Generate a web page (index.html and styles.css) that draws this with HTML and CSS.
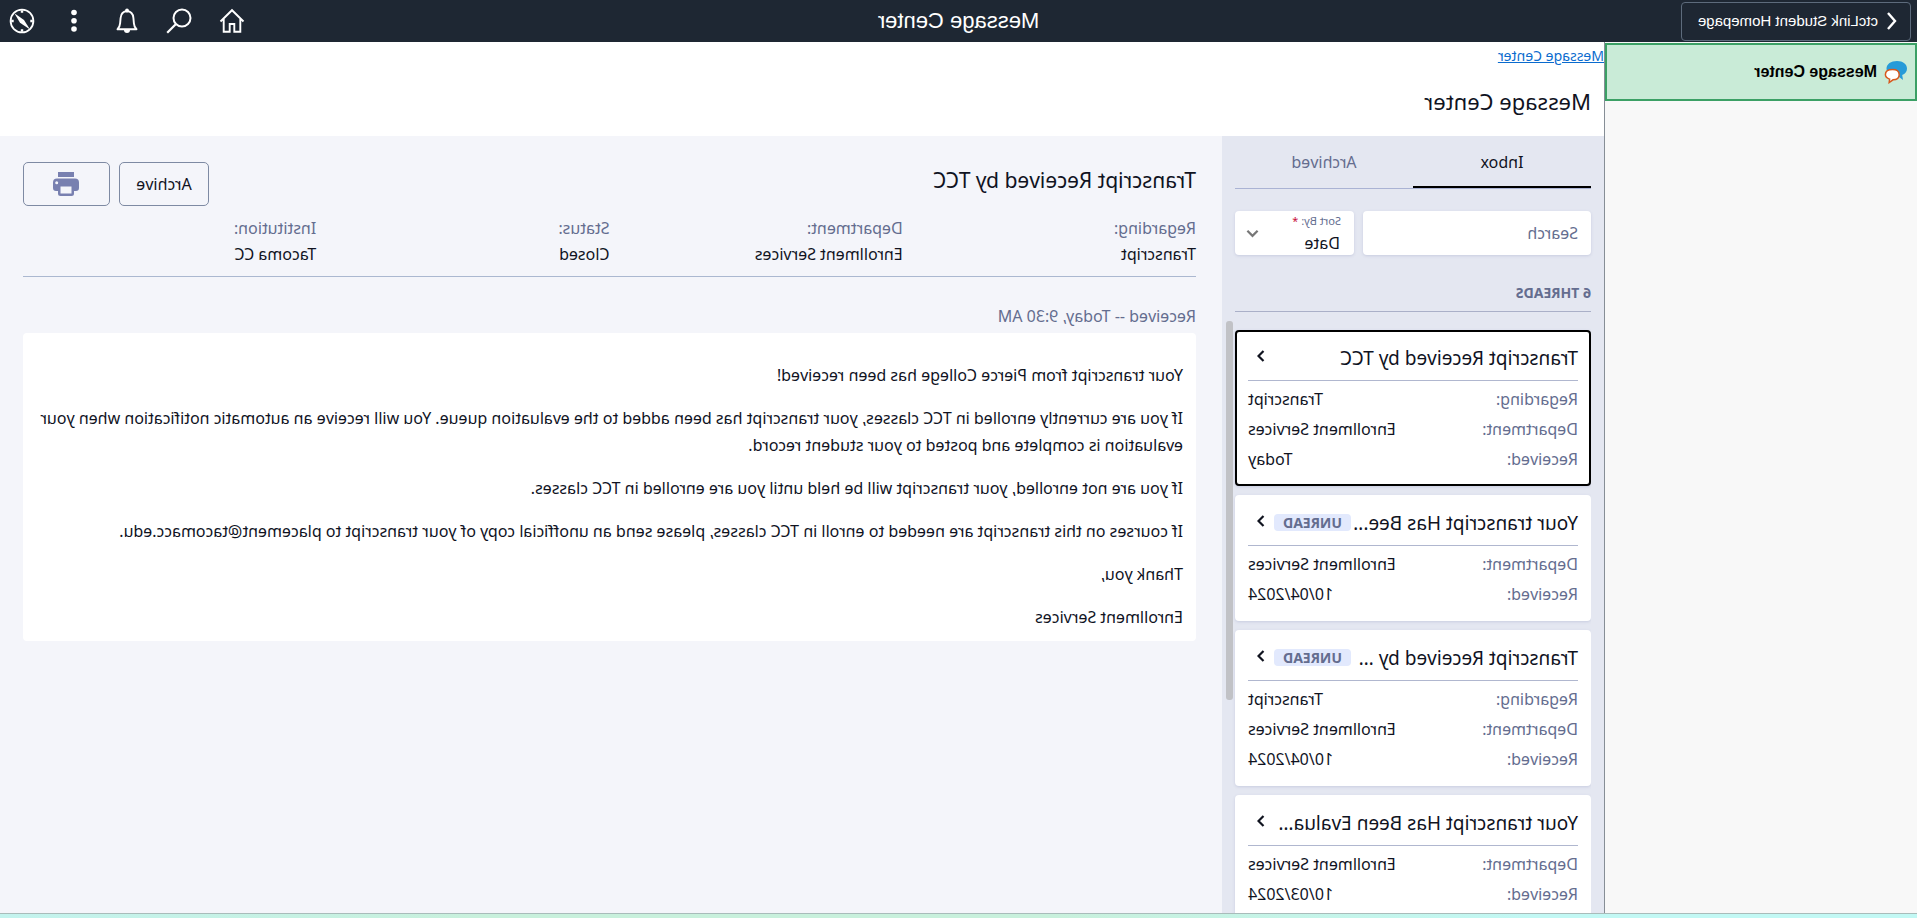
FILE: index.html
```html
<!DOCTYPE html>
<html lang="en">
<head>
<meta charset="utf-8">
<title>Message Center</title>
<link rel="stylesheet" href="styles.css">
</head>
<body>
<div class="app">
  <header class="topbar">
    <div class="topbar-start">
      <button class="back" type="button">
        <svg class="back-icon" viewBox="0 0 10 18" aria-hidden="true"><path d="M9 1L2 9l7 8" fill="none" stroke="currentColor" stroke-width="2.4"/></svg>
        ctcLink Student Homepage
      </button>
    </div>
    <div class="topbar-title">Message Center</div>
    <nav class="topbar-actions">
      <button type="button" class="action" aria-label="Home"><svg viewBox="0 0 26 26"><path d="M1.500 13.500L13 2.200l11.500 11.300M4.700 11v12.800h6V16h4.600v7.800h6V11" fill="none" stroke="currentColor" stroke-width="1.900"/></svg></button>
      <button type="button" class="action" aria-label="Search"><svg viewBox="0 0 26 26"><circle cx="10" cy="10" r="8.500" fill="none" stroke="currentColor" stroke-width="2"/><path d="M16 16l8.800 8.800" stroke="currentColor" stroke-width="2.200"/></svg></button>
      <button type="button" class="action" aria-label="Notifications"><svg viewBox="0 0 26 26"><path d="M3.500 21.300c1.600-1.500 2.400-3.600 2.600-6l.5-5.300C7 6 9.500 3.300 13 3.300s6 2.700 6.400 6.700l.5 5.300c.2 2.400 1 4.500 2.600 6z" fill="none" stroke="currentColor" stroke-width="1.900" stroke-linejoin="round"/><circle cx="13" cy="2.500" r="1.900" fill="currentColor"/><path d="M10 22h6a3 3 0 0 1-6 0z" fill="currentColor"/></svg></button>
      <button type="button" class="action" aria-label="Actions"><svg viewBox="0 0 26 26" fill="currentColor"><circle cx="13" cy="4.500" r="2.800"/><circle cx="13" cy="12.800" r="2.800"/><circle cx="13" cy="21" r="2.800"/></svg></button>
      <button type="button" class="action" aria-label="Navigator"><svg viewBox="0 0 26 26"><circle cx="13" cy="13" r="11.400" fill="none" stroke="currentColor" stroke-width="1.800"/><path d="M20.600 5.200L15 14.800 5 21.500l6-9.600z" fill="currentColor"/><path d="M13 2.200v2.500M13 21.300v2.500M2.200 13h2.500M21.300 13h2.500" stroke="currentColor" stroke-width="2.400"/></svg></button>
    </nav>
  </header>

  <div class="body">
    <aside class="sidebar">
      <a class="side-item" href="#">
        <svg class="chat" viewBox="0 0 24 24" aria-hidden="true"><path d="M11 1C5 1 1 4.200 1 8.700c0 3 1.800 5 4.800 6.400L5 20l5.500-4.200C17 16 21.500 13 21.500 8.500S17 1 11 1z" fill="#269bd8"/><path d="M15.500 9.500c-4.300 0-6.700 2.200-6.700 5.200 0 3.200 2.700 5 6.200 5.100l3.800 2.700-.4-3.400c2.600-.9 4.200-2.400 4.200-4.600 0-3-2.800-5-7.100-5z" fill="#fff" stroke="#d8591d" stroke-width="1.500"/></svg>
        Message Center
      </a>
    </aside>

    <main class="main">
      <div class="heading">
        <a class="crumb" href="#">Message Center</a>
        <h1>Message Center</h1>
      </div>
      <div class="panes">
        <section class="inbox">
          <div class="tabs">
            <button class="tab active" type="button">Inbox</button>
            <button class="tab" type="button">Archived</button>
          </div>
          <div class="filters">
            <input class="search" type="text" placeholder="Search" aria-label="Search">
            <div class="sort">
              <label for="sort">Sort By:<span class="required"> *</span></label>
              <select id="sort"><option>Date</option></select>
              <svg class="sort-icon" viewBox="0 0 14 9" aria-hidden="true"><path d="M1.500 1.500L7 7l5.500-5.500" fill="none" stroke="currentColor" stroke-width="2.400"/></svg>
            </div>
          </div>
          <h2 class="count">6 THREADS</h2>
          <div class="threads">
            <span class="thumb"></span>
            <article class="card selected">
              <div class="card-head"><h3>Transcript Received by TCC</h3><svg class="chevron" viewBox="0 0 8 12"><path d="M1.500 1l5 5-5 5" fill="none" stroke="currentColor" stroke-width="2.200"/></svg></div>
              <dl><dt>Regarding:</dt><dd>Transcript</dd><dt>Department:</dt><dd>Enrollment Services</dd><dt>Received:</dt><dd>Today</dd></dl>
            </article>
            <article class="card">
              <div class="card-head"><h3>Your transcript Has Bee...</h3><span class="badge">UNREAD</span><svg class="chevron" viewBox="0 0 8 12"><path d="M1.500 1l5 5-5 5" fill="none" stroke="currentColor" stroke-width="2.200"/></svg></div>
              <dl><dt>Department:</dt><dd>Enrollment Services</dd><dt>Received:</dt><dd>10/04/2024</dd></dl>
            </article>
            <article class="card">
              <div class="card-head"><h3>Transcript Received by ...</h3><span class="badge">UNREAD</span><svg class="chevron" viewBox="0 0 8 12"><path d="M1.500 1l5 5-5 5" fill="none" stroke="currentColor" stroke-width="2.200"/></svg></div>
              <dl><dt>Regarding:</dt><dd>Transcript</dd><dt>Department:</dt><dd>Enrollment Services</dd><dt>Received:</dt><dd>10/04/2024</dd></dl>
            </article>
            <article class="card">
              <div class="card-head"><h3>Your transcript Has Been Evalua...</h3><svg class="chevron" viewBox="0 0 8 12"><path d="M1.500 1l5 5-5 5" fill="none" stroke="currentColor" stroke-width="2.200"/></svg></div>
              <dl><dt>Department:</dt><dd>Enrollment Services</dd><dt>Received:</dt><dd>10/03/2024</dd></dl>
            </article>
          </div>
        </section>

        <section class="detail">
          <div class="detail-head">
            <h2>Transcript Received by TCC</h2>
            <button class="btn archive" type="button">Archive</button>
            <button class="btn print" type="button" aria-label="Print"><svg viewBox="0 0 26 24"><path d="M5 0h16v5H5z" fill="#7880b0"/><path fill-rule="evenodd" d="M4 6.500h18a4 4 0 0 1 4 4V16a3 3 0 0 1-3 3h-2v2.500a2.500 2.500 0 0 1-2.500 2.500h-11A2.500 2.500 0 0 1 5 21.500V19H3a3 3 0 0 1-3-3v-5.500a4 4 0 0 1 4-4zM7.500 14.500v7h11v-7zM22.300 9.200a1.500 1.500 0 1 0 0 3 1.500 1.500 0 0 0 0-3z" fill="#7880b0"/></svg></button>
          </div>
          <dl class="meta">
            <div><dt>Regarding:</dt><dd>Transcript</dd></div>
            <div><dt>Department:</dt><dd>Enrollment Services</dd></div>
            <div><dt>Status:</dt><dd>Closed</dd></div>
            <div><dt>Institution:</dt><dd>Tacoma CC</dd></div>
          </dl>
          <p class="stamp">Received -- Today, 9:30 AM</p>
          <div class="message">
            <p>Your transcript from Pierce College has been received!</p>
            <p>If you are currently enrolled in TCC classes, your transcript has been added to the evaluation queue. You will receive an automatic notification when your evaluation is complete and posted to your student record.</p>
            <p>If you are not enrolled, your transcript will be held until you are enrolled in TCC classes.</p>
            <p>If courses on this transcript are needed to enroll in TCC classes, please send an unofficial copy of your transcript to placement@tacomacc.edu.</p>
            <p>Thank you,</p>
            <p>Enrollment Services</p>
          </div>
        </section>
      </div>
    </main>
  </div>
  <footer class="strip"></footer>
</div>
</body>
</html>
```

FILE: styles.css
```css
* { box-sizing: border-box; }
html, body { height: 100%; }
body {
  margin: 0;
  overflow: hidden;
  font: 16px/24px "Noto Sans", "Open Sans", sans-serif;
  color: #10131f;
}
h1, h2, h3, p, dl, dd { margin: 0; font-weight: 400; }
button, input, select { font: inherit; color: inherit; }
button { cursor: pointer; }

/* The whole interface is shown mirrored. */
.app {
  display: flex;
  flex-direction: column;
  height: 100%;
  background: #fff;
  transform: scaleX(-1);
}

.topbar {
  display: grid;
  grid-template-columns: 1fr auto 1fr;
  align-items: center;
  flex: none;
  height: 42px;
  padding: 0 6px;
  background: #1e2733;
  color: #fff;
  font-family: "Liberation Sans", Arial, sans-serif;
}
.back {
  display: flex;
  align-items: center;
  gap: 9px;
  height: 39px;
  padding: 0 16px 0 13px;
  border: 1px solid #5d6b7c;
  border-radius: 4px;
  background: none;
  font-size: 15px;
}
.back-icon { width: 10px; height: 18px; }
.topbar-title { font-size: 22px; }
.topbar-actions {
  display: flex;
  justify-content: space-between;
  justify-self: end;
  width: 239px;
  padding-right: 3px;
}
.action { display: flex; padding: 0; border: 0; background: none; }
.action svg { width: 26px; height: 26px; }

.body { display: flex; flex: 1; min-height: 0; }
.sidebar {
  flex: none;
  width: 313px;
  padding-top: 1px;
  border-right: 1px solid #868e96;
  background: #f8f8f8;
}
.side-item {
  display: flex;
  align-items: center;
  gap: 7px;
  height: 58px;
  padding-left: 7px;
  border: 2px solid #3ba065;
  background: #c9ebd7;
  color: #000;
  font: bold 16px "Liberation Sans", Arial, sans-serif;
  text-decoration: none;
}
.chat { width: 24px; height: 24px; }

.main { display: flex; flex-direction: column; flex: 1; min-width: 0; }
.heading { flex: none; height: 94px; }
.crumb { display: block; padding-top: 2px; color: #0a6bce; width: max-content; font-size: 14px; }
h1 { padding: 17px 13px 0; font-size: 22px; line-height: 32px; }

.panes { display: flex; flex: 1; min-height: 0; }
.inbox {
  display: flex;
  flex-direction: column;
  flex: none;
  width: 382px;
  padding-left: 13px;
  background: #e4e7f1;
}
.tabs { display: flex; margin-right: 13px; border-bottom: 1px solid #aab3d4; }
.tab {
  flex: 1;
  height: 52px;
  padding: 2px 0 0;
  border: 0;
  border-bottom: 2px solid transparent;
  background: none;
  color: #646d8f;
}
.tab.active { border-color: #000; color: #10131f; }
.filters { display: flex; gap: 9px; margin: 22px 13px 0 0; }
.search, .sort {
  height: 44px;
  border: 0;
  border-radius: 4px;
  background: #fff;
  box-shadow: 0 1px 3px #c8cce0;
}
.search { flex: 1; min-width: 0; padding: 0 13px; }
.search::placeholder { color: #646d8f; opacity: 1; }
.sort { position: relative; width: 119px; }
.sort label { display: block; padding-left: 13px; color: #646d8f; font-size: 11px; line-height: 20px; }
.required { color: #c8103c; }
.sort select {
  display: block;
  width: 100%;
  height: 24px;
  padding: 0 14px;
  border: 0;
  background: none;
  appearance: none;
}
.sort-icon { position: absolute; right: 11px; top: 18px; width: 13px; height: 9px; color: #777; pointer-events: none; }
.count {
  margin: 28px 13px 0 0;
  padding-bottom: 8px;
  border-bottom: 1px solid #aab0c8;
  color: #646d8f;
  font-size: 14px;
  line-height: 20px;
  font-weight: 700;
}
.threads {
  position: relative;
  display: flex;
  flex-direction: column;
  gap: 9px;
  flex: 1;
  min-height: 0;
  overflow: hidden;
  padding: 18px 13px 0 0;
}
.thumb { position: absolute; top: 9px; right: 4px; width: 7px; height: 379px; border-radius: 3px; background: #c1c2c6; }
.card {
  flex: none;
  padding: 10px 13px 12px;
  border-radius: 4px;
  background: #fff;
  box-shadow: 0 1px 3px #c8cce0;
}
.card.selected { padding: 8px 11px 10px; border: 2px solid #000; }
.card-head { display: flex; align-items: center; height: 41px; padding-bottom: 5px; border-bottom: 1px solid #b0b7cf; }
.card-head h3 { flex: 1; font-size: 19px; line-height: 28px; white-space: nowrap; }
.badge {
  padding: 0 9px;
  border-radius: 4px;
  background: #e2e9fd;
  color: #646d8f;
  font-size: 14px;
  line-height: 17px;
  font-weight: 700;
}
.chevron { width: 8px; height: 12px; margin: 0 9px 4px; }
.card dl { display: grid; grid-template-columns: 1fr auto; padding-top: 3px; line-height: 30px; }
.card dd { text-align: right; }
dt { color: #646d8f; }

.detail { flex: 1; min-width: 0; padding: 26px 23px 0 26px; background: #f4f5fa; }
.detail-head { display: flex; gap: 9px; }
.detail-head h2 { flex: 1; font-size: 21px; line-height: 37px; }
.btn { height: 44px; border: 1px solid #7e8aa3; border-radius: 5px; background: none; }
.archive { width: 90px; }
.print { width: 87px; display: flex; align-items: center; justify-content: center; }
.print svg { width: 26px; height: 24px; }
.meta {
  display: grid;
  grid-template-columns: repeat(4, 1fr);
  padding: 9px 0;
  border-bottom: 1px solid #abb8d0;
  line-height: 26px;
}
.stamp { padding-top: 26px; color: #646d8f; line-height: 26px; }
.message {
  display: flex;
  flex-direction: column;
  gap: 16px;
  margin-top: 4px;
  padding: 29px 13px 10px;
  border-radius: 4px;
  background: #fff;
  line-height: 27px;
}
.strip {
  flex: none;
  height: 5px;
  border-top: 1px solid #a8bcba;
  background: linear-gradient(90deg, #c2f8f4 0%, #c2f8f4 20%, #c8f0dc 45%, #c8f0dc 75%, #c3f3ee 100%);
}
```
